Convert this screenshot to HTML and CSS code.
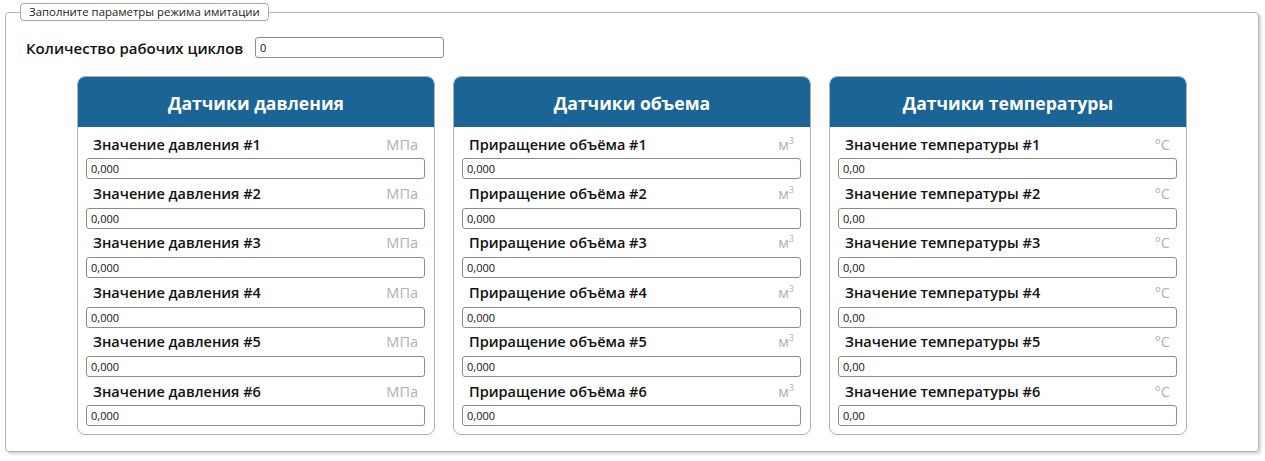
FILE: index.html
```html
<!DOCTYPE html>
<html lang="ru">
<head>
<meta charset="utf-8">
<title>Имитация</title>
<link rel="stylesheet" href="styles.css">
</head>
<body>
<fieldset class="group">
  <legend class="group-title">Заполните параметры режима имитации</legend>
  <div class="cycles">
    <span class="cycles-label">Количество рабочих циклов</span>
    <div class="field cycles-field">0</div>
  </div>
  <div class="cards">
    <section class="card">
      <h2 class="card-head">Датчики давления</h2>
      <div class="card-body">
        <div class="row"><span class="lbl">Значение давления #1</span><span class="unit">МПа</span></div>
        <div class="field">0,000</div>
        <div class="row"><span class="lbl">Значение давления #2</span><span class="unit">МПа</span></div>
        <div class="field">0,000</div>
        <div class="row"><span class="lbl">Значение давления #3</span><span class="unit">МПа</span></div>
        <div class="field">0,000</div>
        <div class="row"><span class="lbl">Значение давления #4</span><span class="unit">МПа</span></div>
        <div class="field">0,000</div>
        <div class="row"><span class="lbl">Значение давления #5</span><span class="unit">МПа</span></div>
        <div class="field">0,000</div>
        <div class="row"><span class="lbl">Значение давления #6</span><span class="unit">МПа</span></div>
        <div class="field">0,000</div>
      </div>
    </section>
    <section class="card">
      <h2 class="card-head">Датчики объема</h2>
      <div class="card-body">
        <div class="row"><span class="lbl">Приращение объёма #1</span><span class="unit">м<sup>3</sup></span></div>
        <div class="field">0,000</div>
        <div class="row"><span class="lbl">Приращение объёма #2</span><span class="unit">м<sup>3</sup></span></div>
        <div class="field">0,000</div>
        <div class="row"><span class="lbl">Приращение объёма #3</span><span class="unit">м<sup>3</sup></span></div>
        <div class="field">0,000</div>
        <div class="row"><span class="lbl">Приращение объёма #4</span><span class="unit">м<sup>3</sup></span></div>
        <div class="field">0,000</div>
        <div class="row"><span class="lbl">Приращение объёма #5</span><span class="unit">м<sup>3</sup></span></div>
        <div class="field">0,000</div>
        <div class="row"><span class="lbl">Приращение объёма #6</span><span class="unit">м<sup>3</sup></span></div>
        <div class="field">0,000</div>
      </div>
    </section>
    <section class="card">
      <h2 class="card-head">Датчики температуры</h2>
      <div class="card-body">
        <div class="row"><span class="lbl">Значение температуры #1</span><span class="unit">°C</span></div>
        <div class="field">0,00</div>
        <div class="row"><span class="lbl">Значение температуры #2</span><span class="unit">°C</span></div>
        <div class="field">0,00</div>
        <div class="row"><span class="lbl">Значение температуры #3</span><span class="unit">°C</span></div>
        <div class="field">0,00</div>
        <div class="row"><span class="lbl">Значение температуры #4</span><span class="unit">°C</span></div>
        <div class="field">0,00</div>
        <div class="row"><span class="lbl">Значение температуры #5</span><span class="unit">°C</span></div>
        <div class="field">0,00</div>
        <div class="row"><span class="lbl">Значение температуры #6</span><span class="unit">°C</span></div>
        <div class="field">0,00</div>
      </div>
    </section>
  </div>
</fieldset>
</body>
</html>
```
FILE: styles.css
```css
html, body {
  margin: 0;
  padding: 0;
  background: #ffffff;
}
body {
  font-family: "Open Sans", "Noto Sans", sans-serif;
  color: #111;
  width: 1265px;
  height: 461px;
  overflow: hidden;
}
.group {
  box-sizing: border-box;
  margin: 3px 0 0 5px;
  width: 1254px;
  height: 449px;
  border: 1px solid #b4b4b4;
  border-radius: 4px;
  padding: 0 0 0 14px;
  box-shadow: 2px 2px 3px rgba(0,0,0,0.18);
  min-width: 0;
}
.group-title {
  box-sizing: border-box;
  height: 18px;
  border: 1px solid #a8a8a8;
  border-radius: 4px;
  padding: 0 8px;
  font-size: 11.4px;
  line-height: 16px;
  color: #222;
}
.cycles {
  display: flex;
  align-items: center;
  height: 21px;
  margin-top: 16px;
  margin-left: 6px;
}
.cycles-label {
  font-weight: 600;
  font-size: 15px;
  width: 229px;
  white-space: nowrap;
  padding-top: 1px;
}
.field {
  box-sizing: border-box;
  height: 21px;
  border: 1px solid #8c8c8c;
  border-radius: 3px;
  padding-left: 4px;
  font-size: 11px;
  line-height: 19px;
  color: #111;
  background: #fff;
}
.cycles-field {
  width: 189px;
  height: 21px;
}
.cards {
  display: flex;
  gap: 18px;
  margin-top: 18px;
  margin-left: 57px;
}
.card {
  box-sizing: border-box;
  width: 358px;
  height: 359px;
  border: 1px solid #b0b0b0;
  border-radius: 8px;
  overflow: hidden;
}
.card-head {
  box-sizing: border-box;
  margin: 0;
  height: 50px;
  padding-top: 3px;
  background: #1a6595;
  color: #fff;
  font-size: 17.6px;
  font-weight: 700;
  line-height: 47px;
  text-align: center;
}
.card-body {
  padding: 3px 9px 0 8px;
}
.row {
  display: flex;
  justify-content: space-between;
  align-items: center;
  height: 28.4px;
  padding: 0 7px 0 7px;
}
.lbl {
  font-weight: 600;
  font-size: 14.5px;
  white-space: nowrap;
}
.unit {
  font-size: 14.5px;
  color: #b0b0b0;
}
.unit sup {
  font-size: 9px;
  vertical-align: 6px;
  line-height: 0;
}
```
